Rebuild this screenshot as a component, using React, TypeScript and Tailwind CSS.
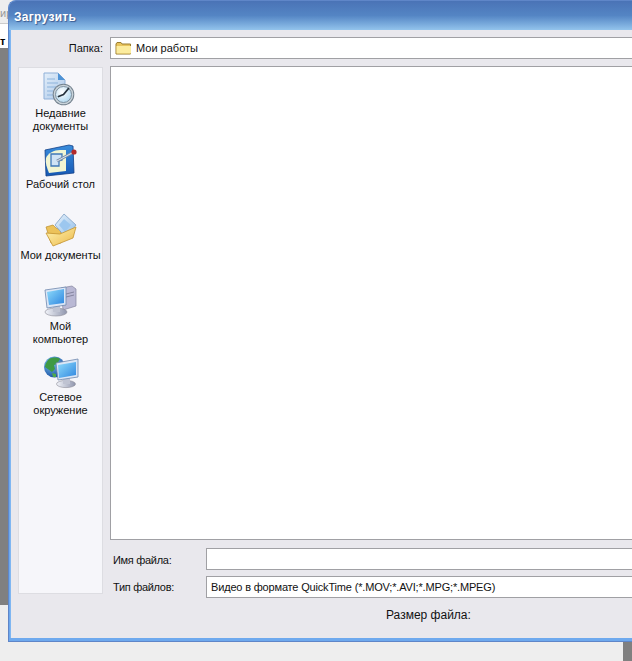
const font = "[font-family:'Liberation_Sans',Arial,sans-serif]";

function RecentIcon() {
  return (
    <svg width="36" height="34" viewBox="0 0 36 34">
      <defs>
        <linearGradient id="pg" x1="0" y1="0" x2="1" y2="1">
          <stop offset="0" stopColor="#e4effa" />
          <stop offset="1" stopColor="#a9c6e8" />
        </linearGradient>
        <radialGradient id="fc" cx="0.4" cy="0.35" r="0.8">
          <stop offset="0" stopColor="#ffffff" />
          <stop offset="1" stopColor="#a6d3ee" />
        </radialGradient>
      </defs>
      <path d="M1 1h14l7 7v19H1z" fill="url(#pg)" stroke="#8fb0d8" />
      <path d="M15 1l7 7h-7z" fill="#4f93d6" />
      <path d="M4 7h8M4 11h11M4 15h9M4 19h6M4 23h6" stroke="#8db3dc" strokeWidth="1.2" />
      <circle cx="20.500" cy="22.500" r="10.800" fill="#75838f" />
      <circle cx="20.500" cy="22.500" r="9.800" fill="#c9d3da" />
      <circle cx="20.500" cy="22.500" r="8" fill="url(#fc)" stroke="#7d8f9e" />
      <path d="M20.500 22.500l5-6M20.500 22.500l-5 2" stroke="#26323c" strokeWidth="1.800" strokeLinecap="round" />
    </svg>
  );
}

function DesktopIcon() {
  return (
    <svg width="36" height="34" viewBox="0 0 36 34">
      <defs>
        <linearGradient id="db" x1="0" y1="0" x2="0" y2="1">
          <stop offset="0" stopColor="#3a8ddc" />
          <stop offset="1" stopColor="#1558b4" />
        </linearGradient>
      </defs>
      <path d="M2 7l24-5 4 1 1 27-28 3z" fill="url(#db)" stroke="#123f86" strokeWidth="0.800" strokeLinejoin="round" />
      <path d="M3 15c2-5 8-8 14-8h6v21L6 30c-2-5-4-10-3-15z" fill="#f1f5d2" />
      <path d="M8 11h11v6l-3 1v5H8z" fill="#cfe3f5" stroke="#3f78b8" strokeWidth="1.300" />
      <path d="M14 18l15-8" stroke="#7a8ea8" strokeWidth="2.600" />
      <path d="M14 18l15-8" stroke="#e6eef6" strokeWidth="0.900" />
      <circle cx="31" cy="9" r="2.600" fill="#b42a2a" />
    </svg>
  );
}

function DocumentsIcon() {
  return (
    <svg width="36" height="36" viewBox="0 0 36 36">
      <defs>
        <linearGradient id="fy" x1="0" y1="0" x2="1" y2="1">
          <stop offset="0" stopColor="#fff5b5" />
          <stop offset="1" stopColor="#ecb848" />
        </linearGradient>
        <linearGradient id="dk" x1="0" y1="0" x2="1" y2="1">
          <stop offset="0" stopColor="#e6f1fb" />
          <stop offset="1" stopColor="#90bde8" />
        </linearGradient>
      </defs>
      <path d="M3 14l7-2 3 3 5 2v13H8z" fill="#ecc25a" stroke="#b98c2d" strokeWidth="0.700" />
      <path d="M12 12L21 1l12 11-10 13z" fill="url(#dk)" stroke="#7f9fc4" strokeWidth="0.800" />
      <path d="M16 12l5-6 7 6-6 7z" fill="#9cc7ef" />
      <path d="M3 20l14 1 16-7-3 11-20 8z" fill="url(#fy)" stroke="#c4932f" strokeWidth="0.800" />
    </svg>
  );
}

function MonitorDefs({ prefix }: { prefix: string }) {
  return (
    <defs>
      <linearGradient id={prefix + "s"} x1="0" y1="0" x2="1" y2="1">
        <stop offset="0" stopColor="#8fdcfb" />
        <stop offset="1" stopColor="#2f86e0" />
      </linearGradient>
      <linearGradient id={prefix + "b"} x1="0" y1="0" x2="1" y2="0">
        <stop offset="0" stopColor="#f2f4fa" />
        <stop offset="1" stopColor="#8f95ad" />
      </linearGradient>
    </defs>
  );
}

function ComputerIcon() {
  return (
    <svg width="36" height="34" viewBox="0 0 36 34">
      <MonitorDefs prefix="c" />
      <path d="M18 3l11-2 4 3v17l-13 4z" fill="#b9b8d4" stroke="#85859f" strokeWidth="0.700" />
      <path d="M23 9l8-2M23 12l8-2" stroke="#84849f" />
      <ellipse cx="13" cy="27" rx="11" ry="4" fill="url(#cb)" stroke="#8a8a96" strokeWidth="0.600" />
      <path d="M10 21h7v6h-7z" fill="#bfc3d2" />
      <path d="M2 5l21-3v18L4 23z" fill="#dbe6f6" stroke="#6f88ad" strokeWidth="0.800" />
      <path d="M4 7l17-3v14L6 20z" fill="url(#cs)" />
    </svg>
  );
}

function NetworkIcon() {
  return (
    <svg width="36" height="36" viewBox="0 0 36 36">
      <MonitorDefs prefix="n" />
      <defs>
        <radialGradient id="gl" cx="0.35" cy="0.3" r="0.8">
          <stop offset="0" stopColor="#7fc4f2" />
          <stop offset="1" stopColor="#10479c" />
        </radialGradient>
      </defs>
      <circle cx="11.500" cy="12" r="10.500" fill="url(#gl)" />
      <path d="M6 4c3-2 9-2 11 0l-3 5-3 1 1 4-3 3-7-5c0-3 2-6 4-8z" fill="#3f9a44" />
      <path d="M9 18l4 1 0 3-3 0z" fill="#4faa4c" />
      <ellipse cx="23" cy="29" rx="9.500" ry="3.600" fill="url(#nb)" stroke="#8a8a96" strokeWidth="0.600" />
      <path d="M20 23h7v6h-7z" fill="#bfc3d2" />
      <path d="M13 8l22-4v18l-20 3z" fill="#dbe6f6" stroke="#6f88ad" strokeWidth="0.800" />
      <path d="M15 10l18-3v13l-17 3z" fill="url(#ns)" />
    </svg>
  );
}

function FolderIcon() {
  return (
    <svg width="17" height="14" viewBox="0 0 17 14">
      <path d="M1 3l1-1.500h4l1 1.500h8.500v10H1z" fill="#e8c45c" stroke="#9a7c30" />
      <path d="M1.500 5h14.500v7.500H1.500z" fill="#fcec9e" />
    </svg>
  );
}

const places = [
  { icon: <RecentIcon />, lines: ["Недавние", "документы"] },
  { icon: <DesktopIcon />, lines: ["Рабочий стол"] },
  { icon: <DocumentsIcon />, lines: ["Мои документы"] },
  { icon: <ComputerIcon />, lines: ["Мой", "компьютер"] },
  { icon: <NetworkIcon />, lines: ["Сетевое", "окружение"] },
];

export default function App() {
  return (
    <div className={`relative flex h-[661px] w-[632px] overflow-hidden bg-[#eeeeee] text-[11px] text-[#111] ${font}`}>
      {/* what is left of the window behind the dialog */}
      <div className="flex w-[8px] shrink-0 flex-col">
        <div className="h-[24px] overflow-hidden border-b border-[#ccc] pt-[6px] text-[11px] leading-[14px] text-[#999]">ир</div>
        <div className="h-[24px] overflow-hidden bg-white pt-[10px] text-[11px] font-bold leading-[14px] text-black">т</div>
        <div className="h-[557px] bg-[#808080]" />
      </div>

      <div className="flex h-[642px] w-[624px] shrink-0 flex-col overflow-hidden rounded-tl-[8px] border-t border-l border-b border-[#5f86c8] bg-[#6ea9ee]">
        <div className="flex h-[29px] shrink-0 items-center bg-gradient-to-b from-[#4a73b6] via-[#5485c4] to-[#93c4ec] pl-[5px] pt-[3px] text-[12px] font-bold tracking-[0.3px] text-white [text-shadow:1px_1px_1px_#3a5a90]">
          Загрузить
        </div>

        <div className="mb-[3px] ml-[1px] flex min-h-0 flex-1 flex-col border-l border-[#7fb6f2] bg-[#e9e8ed] pt-[7px]">
          <div className="flex h-[22px] shrink-0 items-center">
            <span className="w-[99px] pr-[7px] text-right">Папка:</span>
            <div className="flex h-[22px] flex-1 items-center gap-[4px] border-y border-l border-[#a0a0a4] bg-white pl-[4px]">
              <FolderIcon />
              <span>Мои работы</span>
            </div>
          </div>

          <div className="mt-[7px] flex min-h-0 flex-1">
            <div className="ml-[7px] mt-[1px] flex h-[527px] w-[85px] shrink-0 flex-col border border-[#dddde2] bg-[#f6f6fa] pt-[3px]">
              {places.map((place) => (
                <div key={place.lines[0]} className="flex h-[71px] shrink-0 flex-col items-center">
                  <div className="flex h-[36px] items-center">{place.icon}</div>
                  {place.lines.map((line) => (
                    <div key={line} className="text-center leading-[13px]">{line}</div>
                  ))}
                </div>
              ))}
            </div>

            <div className="ml-[7px] flex min-w-0 flex-1 flex-col">
              <div className="h-[474px] border-y border-l border-[#a0a0a4] bg-white" />
              <div className="mt-[8px] flex h-[22px] items-center">
                <span className="w-[96px] pl-[3px] pt-[2px] tracking-[-0.3px]">Имя файла:</span>
                <div className="h-[22px] flex-1 border-y border-l border-[#a0a0a4] bg-white" />
              </div>
              <div className="mt-[6px] flex h-[22px] items-center">
                <span className="w-[96px] pl-[3px] tracking-[-0.3px]">Тип файлов:</span>
                <div className="flex h-[22px] flex-1 items-center border-y border-l border-[#a0a0a4] bg-white pl-[4px] tracking-[-0.17px]">
                  Видео в формате QuickTime (*.MOV;*.AVI;*.MPG;*.MPEG)
                </div>
              </div>
              <div className="mt-[9px] pl-[276px] text-[12px] leading-[16px]">Размер файла:</div>
            </div>
          </div>
        </div>
      </div>

      <div className="absolute bottom-0 right-0 h-[19px] w-[9px] bg-[#808080]" />
    </div>
  );
}
